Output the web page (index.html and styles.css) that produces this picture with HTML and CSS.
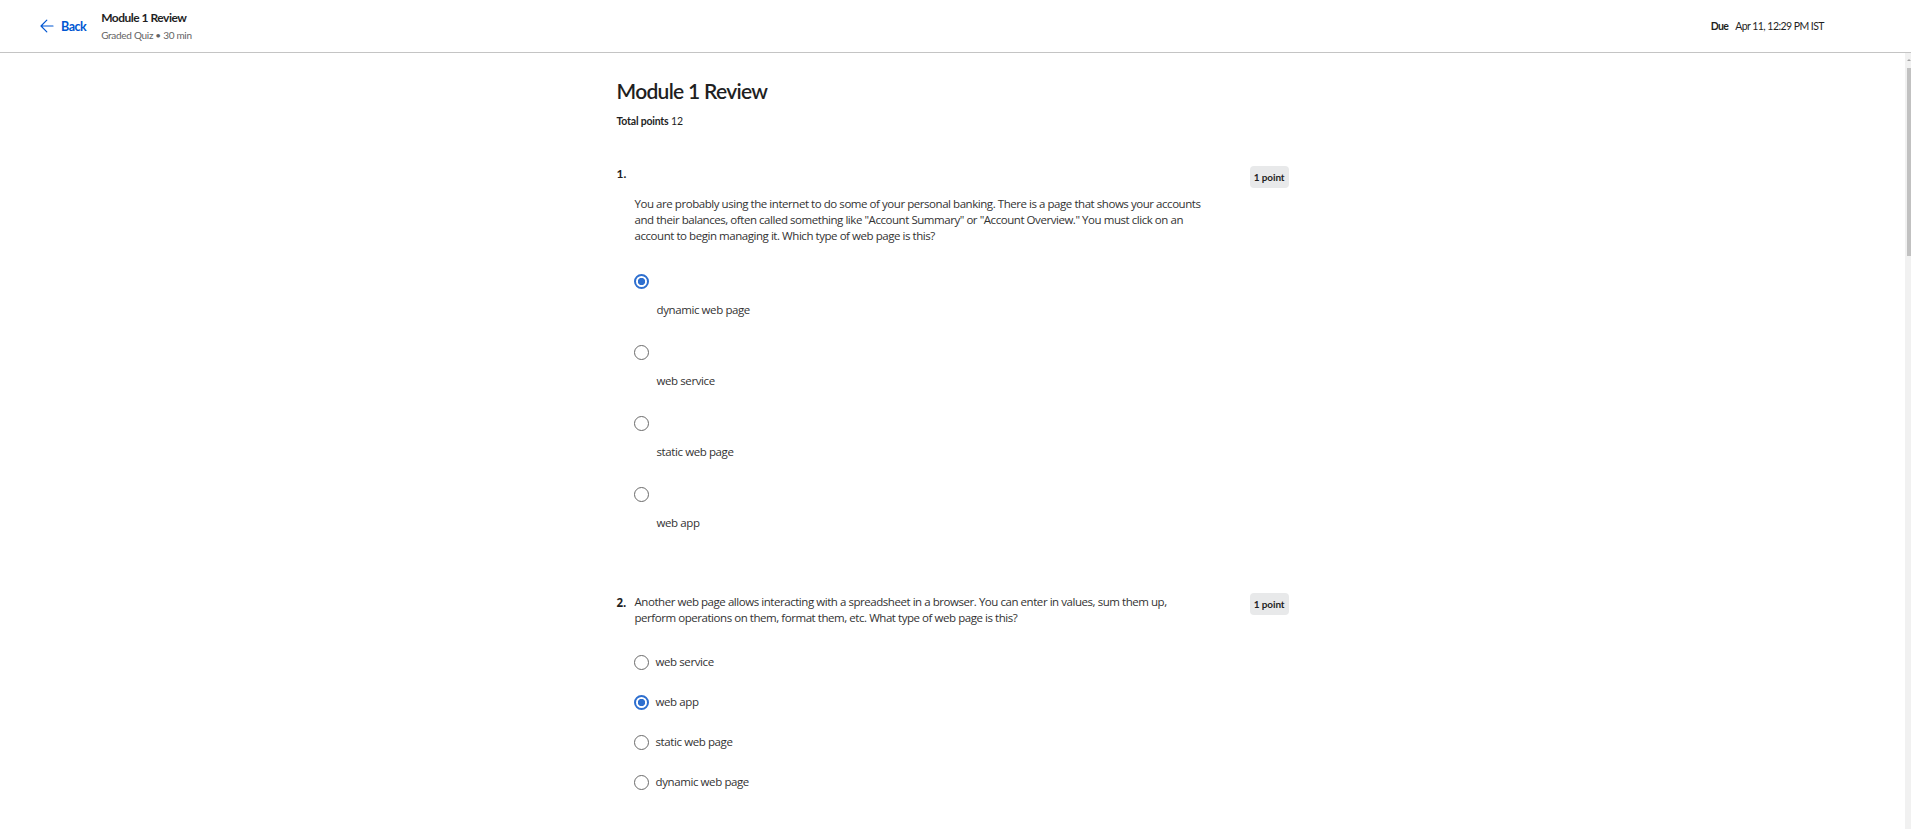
FILE: index.html
```html
<!DOCTYPE html>
<html lang="en">
<head>
<meta charset="utf-8">
<title>Module 1 Review</title>
<link rel="stylesheet" href="styles.css">
</head>
<body>
<header class="topbar">
  <div class="topbar-left">
    <a class="back" href="#">
      <svg class="back-icon" width="14" height="14" viewBox="0 0 14 14" aria-hidden="true">
        <path d="M13 7H1.2M6.8 1.2L1 7l5.8 5.8" fill="none" stroke="#0056d2" stroke-width="1.2" stroke-linecap="round" stroke-linejoin="round"/>
      </svg>
      <span>Back</span>
    </a>
    <div class="titles">
      <div class="titles-main">Module 1 Review</div>
      <div class="titles-sub">Graded Quiz • 30 min</div>
    </div>
  </div>
  <div class="due"><b>Due</b> Apr 11, 12:29 PM IST</div>
</header>
<main class="main">
  <div class="viewport">
    <div class="quiz">
      <h1 class="quiz-title">Module 1 Review</h1>
      <p class="total"><b>Total points</b> 12</p>

      <section class="question">
        <div class="q-head">
          <span class="q-num">1.</span>
          <span class="badge">1 point</span>
        </div>
        <div class="q-body">
          <p class="q-text">You are probably using the internet to do some of your personal banking. There is a page that shows your accounts and their balances, often called something like "Account Summary" or "Account Overview." You must click on an account to begin managing it. Which type of web page is this?</p>
          <div class="stack-options">
            <div class="stack-option"><span class="radio checked"></span><span class="opt-label">dynamic web page</span></div>
            <div class="stack-option"><span class="radio"></span><span class="opt-label">web service</span></div>
            <div class="stack-option"><span class="radio"></span><span class="opt-label">static web page</span></div>
            <div class="stack-option"><span class="radio"></span><span class="opt-label">web app</span></div>
          </div>
        </div>
      </section>

      <section class="question question-inline">
        <div class="q-head">
          <span class="q-num q-num-inline">2.</span>
          <p class="q-text q-text-inline">Another web page allows interacting with a spreadsheet in a browser. You can enter in values, sum them up, perform operations on them, format them, etc. What type of web page is this?</p>
          <span class="badge">1 point</span>
        </div>
        <div class="q-body">
          <div class="row-options">
            <div class="row-option"><span class="radio"></span><span class="opt-label">web service</span></div>
            <div class="row-option"><span class="radio checked"></span><span class="opt-label">web app</span></div>
            <div class="row-option"><span class="radio"></span><span class="opt-label">static web page</span></div>
            <div class="row-option"><span class="radio"></span><span class="opt-label">dynamic web page</span></div>
          </div>
        </div>
      </section>
    </div>
  </div>
  <div class="rail" aria-hidden="true">
    <div class="rail-btn"><span class="rail-arrow"></span></div>
    <div class="rail-thumb"></div>
  </div>
</main>
</body>
</html>
```

FILE: styles.css
```css
* { box-sizing: border-box; }

html, body {
  margin: 0;
  padding: 0;
  height: 100%;
}

body {
  display: flex;
  flex-direction: column;
  height: 100vh;
  overflow: hidden;
  background: #ffffff;
  font-family: Lato, "Noto Sans", sans-serif;
  color: #1f1f1f;
}

/* ---------- top bar ---------- */
.topbar {
  flex: 0 0 auto;
  height: 53px;
  border-bottom: 1px solid #c4c4c4;
  display: flex;
  align-items: center;
  justify-content: space-between;
  padding: 0 87px 0 40px;
}

.topbar-left {
  display: flex;
  align-items: center;
  gap: 15px;
}

.back {
  display: flex;
  align-items: center;
  gap: 7px;
  text-decoration: none;
  color: #0056d2;
  font-weight: 700;
  font-size: 12.5px;
  letter-spacing: -0.5px;
}

.back-icon { display: block; }

.titles {
  display: flex;
  flex-direction: column;
  gap: 2px;
  margin-top: -1px;
}

.titles-main {
  font-size: 12px;
  font-weight: 700;
  line-height: 16px;
  letter-spacing: -0.5px;
  color: #1f1f1f;
}

.titles-sub {
  font-size: 10px;
  line-height: 14px;
  letter-spacing: -0.3px;
  color: #636363;
}

.due {
  font-size: 10.5px;
  letter-spacing: -0.55px;
  color: #1f1f1f;
}

.due b {
  font-weight: 700;
  margin-right: 5px;
}

/* ---------- main area ---------- */
.main {
  flex: 1 1 auto;
  display: flex;
  min-height: 0;
}

.viewport {
  flex: 1 1 auto;
  overflow: hidden;
}

.rail {
  flex: 0 0 6px;
  background: #f1f1f1;
  display: flex;
  flex-direction: column;
}

.rail-btn {
  height: 15px;
  display: flex;
  justify-content: flex-end;
  padding-top: 6px;
}

.rail-arrow {
  width: 0;
  height: 0;
  border-left: 2px solid transparent;
  border-right: 2px solid transparent;
  border-bottom: 2px solid #a3a3a3;
}

.rail-thumb {
  height: 188px;
  margin-left: 2px;
  background: #c1c1c1;
}

.quiz {
  width: 672px;
  margin: 0 auto;
  padding-top: 24px;
}

.quiz-title {
  margin: 0;
  font-size: 21px;
  line-height: 28px;
  font-weight: 600;
  letter-spacing: -0.7px;
  color: #1f1f1f;
}

.total {
  margin: 8px 0 0;
  font-size: 10.5px;
  line-height: 16px;
  letter-spacing: -0.2px;
  color: #1f1f1f;
}

.total b { font-weight: 700; }

/* ---------- questions ---------- */
.question {
  margin-top: 37px;
}

.question-inline {
  margin-top: 62px;
}

.q-head {
  display: flex;
  align-items: flex-start;
  justify-content: space-between;
}

.q-num {
  font-size: 12px;
  font-weight: 700;
  line-height: 16px;
  width: 18px;
  flex: 0 0 auto;
}

.q-num-inline {
  font-family: "Open Sans", sans-serif;
  font-size: 11.5px;
  letter-spacing: -0.2px;
  padding-top: 2px;
}

.badge {
  flex: 0 0 auto;
  background: #e8e9ea;
  border-radius: 4px;
  font-size: 10px;
  font-weight: 700;
  line-height: 22px;
  height: 22px;
  padding: 0 4px;
  color: #1f1f1f;
  letter-spacing: -0.1px;
  margin-left: auto;
}

.q-body {
  padding-left: 18px;
}

.q-text {
  margin: 0;
  font-family: "Open Sans", sans-serif;
  font-size: 11.5px;
  letter-spacing: -0.45px;
  line-height: 16px;
  color: #333333;
  max-width: 585px;
}

.question .q-body > .q-text {
  margin-top: 8px;
}

.q-text-inline {
  flex: 0 1 560px;
  margin-top: 0;
  padding-top: 1px;
  max-width: 560px;
}

.opt-label {
  font-family: "Open Sans", sans-serif;
  font-size: 11.5px;
  letter-spacing: -0.4px;
  line-height: 16px;
  color: #333333;
}

.radio {
  display: block;
  flex: 0 0 auto;
  width: 15px;
  height: 15px;
  border-radius: 50%;
  border: 1.5px solid #6a6a6a;
  background: #ffffff;
}

.radio.checked {
  border: 2px solid #2e6fcf;
  background: radial-gradient(circle, #2e6fcf 0 3.4px, #ffffff 3.9px);
}

/* stacked options (question 1) */
.stack-options {
  margin-top: 30px;
  display: flex;
  flex-direction: column;
  gap: 27px;
}

.stack-option {
  display: flex;
  flex-direction: column;
  gap: 13px;
}

.stack-option .radio {
  margin-left: -1px;
}

.stack-option .opt-label {
  padding-left: 22px;
}

/* row options (question 2) */
.row-options {
  margin-top: 24px;
  display: flex;
  flex-direction: column;
  gap: 16px;
}

.row-option {
  display: flex;
  align-items: center;
  gap: 7px;
  height: 24px;
  margin-left: -1px;
}
```
